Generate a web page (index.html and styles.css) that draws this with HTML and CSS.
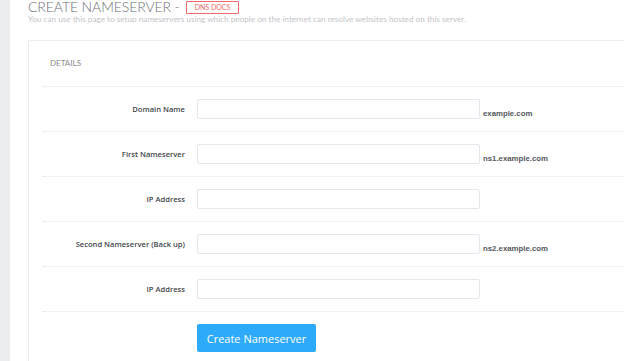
FILE: index.html
```html
<!DOCTYPE html>
<html lang="en">
<head>
    <meta charset="UTF-8">
    <title>Create Nameserver</title>
    <link rel="stylesheet" href="styles.css">
</head>
<body>
    <div class="page">
        <div class="sidebar"></div>

        <div class="main">
            <div class="heading">
                <h1 class="title">CREATE NAMESERVER -</h1>
                <a class="docs" href="#">DNS DOCS</a>
            </div>
            <p class="subtitle">You can use this page to setup nameservers using which people on the internet can resolve websites hosted on this server.</p>

            <div class="card">
                <div class="card-head">DETAILS</div>

                <form class="card-body">
                    <div class="row">
                        <label class="label">Domain Name</label>
                        <input class="field" type="text">
                        <span class="hint">example.com</span>
                    </div>
                    <div class="row">
                        <label class="label">First Nameserver</label>
                        <input class="field" type="text">
                        <span class="hint">ns1.example.com</span>
                    </div>
                    <div class="row">
                        <label class="label">IP Address</label>
                        <input class="field" type="text">
                    </div>
                    <div class="row">
                        <label class="label">Second Nameserver (Back up)</label>
                        <input class="field" type="text">
                        <span class="hint">ns2.example.com</span>
                    </div>
                    <div class="row">
                        <label class="label">IP Address</label>
                        <input class="field" type="text">
                    </div>
                    <div class="row row-last">
                        <span class="label"></span>
                        <button class="btn" type="button">Create Nameserver</button>
                    </div>
                </form>
            </div>
        </div>
    </div>
</body>
</html>
```

FILE: styles.css
```css
/*初始化*/
html, body {
    margin: 0;
    padding: 0;
    background: #fff;
    overflow: hidden;
}

.page {
    display: flex;
    height: 361px;
}

/*左侧灰条*/
.sidebar {
    width: 10px;
    flex: none;
    background-color: #ebedf1;
}

.main {
    flex: 1;
    padding-left: 18px;
    min-width: 0;
    overflow: hidden;
}

/*标题*/
.heading {
    display: flex;
    align-items: center;
    gap: 6px;
    height: 14px;
}

.title {
    margin: 0;
    font-family: "Lato", "Liberation Sans", sans-serif;
    font-weight: 300;
    font-size: 14px;
    line-height: 14px;
    letter-spacing: -0.1px;
    color: #6b6f76;
}

.docs {
    display: block;
    padding: 0 8px;
    height: 11px;
    line-height: 11px;
    border: 1px solid #f1676a;
    border-radius: 1px;
    font-family: "Lato", "Liberation Sans", sans-serif;
    font-size: 7px;
    color: #f1676a;
    text-decoration: none;
}

.subtitle {
    margin: 0;
    font-family: "Lato", "Liberation Sans", sans-serif;
    font-size: 8.2px;
    line-height: 11px;
    color: #c3c5c9;
}

/*卡片*/
.card {
    margin-top: 15px;
    width: 640px;
    height: 340px;
    border: 1px solid #e9edf3;
    border-radius: 2px;
}

.card-head {
    height: 45px;
    line-height: 45px;
    padding-left: 21px;
    font-family: "Lato", "Liberation Sans", sans-serif;
    font-size: 8px;
    color: #8a8d92;
}

.card-body {
    margin: 0;
    padding: 0 0 0 14px;
}

.row {
    display: flex;
    align-items: center;
    border-top: 1px dotted #dfe4ea;
    padding: 12px 0;
}

.row-last {
    padding-bottom: 0;
}

.label {
    width: 142px;
    flex: none;
    margin-right: 12px;
    text-align: right;
    font-family: "Open Sans", "Liberation Sans", sans-serif;
    font-weight: 600;
    font-size: 7.6px;
    color: #44474c;
}

.field {
    width: 283px;
    height: 20px;
    box-sizing: border-box;
    margin: 0;
    border: 1px solid #e3e8ee;
    border-radius: 2px;
    background: #fff;
    flex: none;
}

.hint {
    margin-left: 3px;
    margin-top: 8px;
    font-family: "Liberation Sans", Arial, sans-serif;
    font-weight: bold;
    font-size: 7.8px;
    color: #54575c;
}

.btn {
    width: 119px;
    height: 28px;
    margin: 0;
    padding: 0;
    border: none;
    border-radius: 2px;
    background-color: #2eaafa;
    color: #fff;
    font-family: "Open Sans", "Liberation Sans", sans-serif;
    font-size: 11px;
    cursor: pointer;
}
```
